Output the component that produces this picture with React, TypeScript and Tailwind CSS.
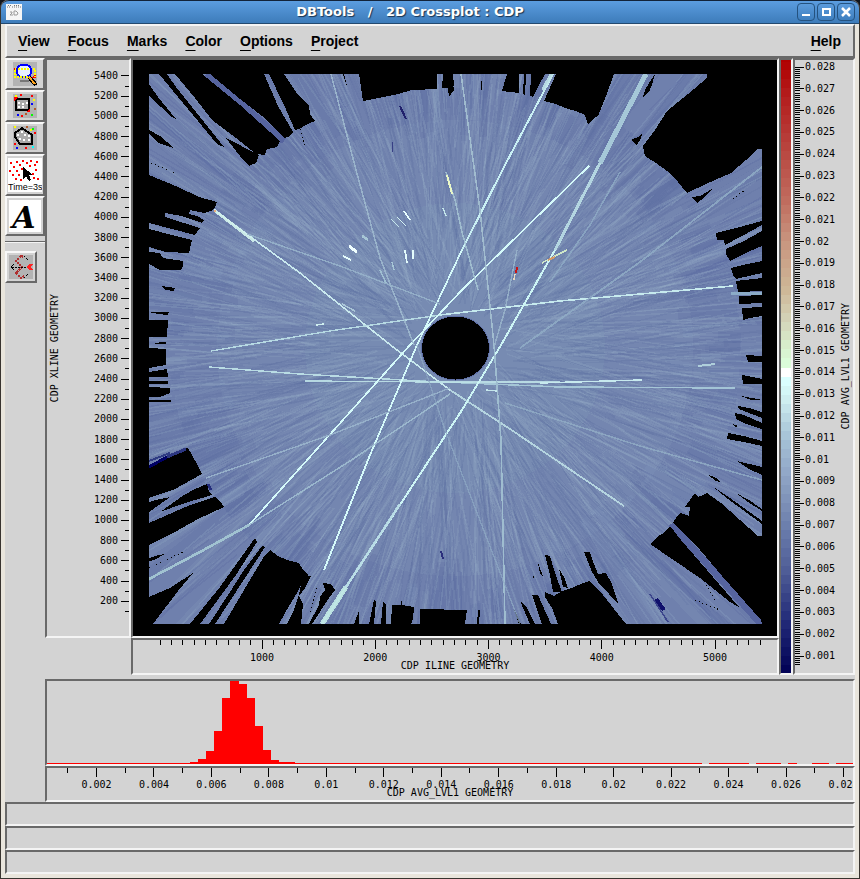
import React from "react";

const SUNK =
  "border-2 border-t-[#696969] border-l-[#696969] border-b-[#f4f4f4] border-r-[#f4f4f4] bg-[#d3d3d3]";
const MONO = "font-['DejaVu_Sans_Mono',monospace] text-[10px] leading-[10px]";

function seeded(seed: number) {
  let s = seed;
  return () => {
    s = (s * 1664525 + 1013904223) >>> 0;
    return s / 4294967296;
  };
}

type Streak = { x1: number; y1: number; x2: number; y2: number; w: number; c: string; o: number };

function makeStreaks(): Streak[] {
  const rnd = seeded(77);
  const out: Streak[] = [];
  const cx = 455;
  const cy = 348;
  const push = (a: number, p: number, r1: number, r2: number, w: number, c: string, o: number) => {
    const dx = Math.cos(a);
    const dy = Math.sin(a);
    out.push({
      x1: Math.round(cx - dy * p + dx * r1),
      y1: Math.round(cy + dx * p + dy * r1 * 0.96),
      x2: Math.round(cx - dy * p + dx * r2),
      y2: Math.round(cy + dx * p + dy * r2 * 0.96),
      w,
      c,
      o,
    });
  };
  for (let i = 0; i < 320; i++) {
    const r1 = 215 + rnd() * 60;
    const r2 = rnd() < 0.5 ? 500 : 285;
    push(rnd() * Math.PI * 2, (rnd() - 0.5) * 60, r1, r2, 3 + rnd() * 9, rnd() < 0.6 ? "#5f70a3" : "#8196bb", 0.28);
  }
  for (let i = 0; i < 1800; i++) {
    const r1 = 40 + rnd() * 190;
    const r2 = r1 + 50 + rnd() * 170;
    const light = rnd() < 0.48;
    push(rnd() * Math.PI * 2, (rnd() - 0.5) * 66, r1, r2, 1 + rnd() * 1.2, light ? "#9bb2ca" : "#5d6fa2", light ? 0.18 : 0.2);
  }
  for (let i = 0; i < 260; i++) {
    const r1 = 220 + rnd() * 100;
    push(rnd() * Math.PI * 2, (rnd() - 0.5) * 60, r1, 520, 1.5, rnd() < 0.5 ? "#8ca4c2" : "#5c6ca3", 0.3);
  }
  return out;
}
const STREAKS = makeStreaks();

const GAPS: string[] = [
  "149,84 158,97 176,119 172,117 149,96",
  "149,130 160,136 174,148 158,143 149,133",
  "159,74 167,74 176,87 224,147 217,144",
  "175,74 202,74 240,105 280,141 277,147 267,149 265,155 256,154 236,138 212,120 195,98",
  "226,138 259,155 256,163 249,166 243,160",
  "210,74 264,74 278,106 293,132 290,136 284,138 262,116 240,99",
  "269,74 284,74 296,92 309,106 310,114 315,121 308,124 299,129 295,130 284,105",
  "344,74 347,86 345,80 343,74",
  "359,74 437,74 437,89 412,90 398,94 389,96 378,98 363,101",
  "443,74 451,74 454,90 449,97 448,88 442,88",
  "451,74 453,74 454,86 452,85",
  "507,74 519,74 519,93 502,91",
  "524,74 526,74 525,96 523,94",
  "531,74 545,74 539,85 533,97 530,96",
  "481,81 482,81 482,90 481,90",
  "556,74 614,74 606,96 598,116 593,119 588,125 585,115 576,111 565,108 556,104 544,101",
  "655,74 652,85 649,92 643,97 645,90 651,80",
  "707,74 707,78 688,94 667,111 655,130 643,146 645,156 656,163 667,171 678,182 687,193 706,184 731,173 746,160 758,149 762,149 762,74",
  "631,140 638,137 643,132 640,140 637,145",
  "692,197 700,196 712,189 704,198 697,203",
  "716,233 740,227 762,221 762,225 742,236 725,245 724,240 717,240",
  "726,249 744,241 762,231 762,246 748,252 730,261 726,254",
  "731,268 747,264 762,261 762,273 736,279 733,275",
  "736,281 762,278 762,291 738,292",
  "739,296 762,295 762,303 739,304",
  "742,308 762,307 762,316 750,318 743,320",
  "746,355 762,356 762,362 748,362",
  "742,375 752,377 762,379 762,384 743,384",
  "741,396 752,398 762,400 751,400",
  "738,406 749,408 762,412 762,418 739,409",
  "735,413 744,415 762,423 762,429 746,424 736,419",
  "732,424 739,426 735,427",
  "728,433 744,436 762,441 762,446 744,442 727,439",
  "737,461 762,467 762,475 749,469",
  "712,486 728,499 762,524 762,521 730,498",
  "736,493 749,500 762,509 762,511 748,502",
  "707,474 716,478 722,483 716,481",
  "695,493 698,497 703,495 707,493 721,503 758,536 762,536 762,624 761,620 722,576 695,544 680,530 673,523 677,516 681,513 689,516 690,507 685,507",
  "650,544 657,537 665,532 670,526 681,540 713,577 739,607 730,602 700,578",
  "584,552 590,552 594,564 598,574 606,573 611,582 619,605 609,594 600,585 592,572",
  "558,624 552,608 545,597 545,592 554,596 562,591 572,588 583,583 590,581 603,595 626,624",
  "545,555 550,556 555,573 562,592 553,592 550,575",
  "538,563 543,576 544,578 540,574",
  "559,569 564,577 568,588 563,587",
  "533,573 534,578 533,578",
  "532,595 538,595 551,624 542,624",
  "521,602 526,606 535,624 530,624 523,608",
  "514,609 517,615 521,624 519,624",
  "420,609 467,610 465,624 420,624",
  "478,610 480,610 479,624 477,624",
  "392,605 401,605 401,597 402,605 414,607 413,619 411,624 391,624",
  "383,602 386,604 386,624 381,624",
  "374,600 376,601 374,624 369,624",
  "359,611 359,624 354,624",
  "323,583 331,584 335,590 329,598 312,624 309,624 319,605 320,597 325,590",
  "303,575 311,576 305,588 299,596 303,604 301,624 287,624 294,610 299,595",
  "270,550 278,556 287,560 299,563 303,570 309,575 304,577 301,585 297,593 289,606 279,624 224,624 244,590 265,555",
  "262,546 265,547 245,578 215,624 209,624 230,592 244,570",
  "255,538 257,542 236,575 200,624 190,624 220,587",
  "149,597 170,588 193,573 178,591 153,624 149,624",
  "149,545 175,532 198,519 224,507 221,502 215,497 190,505 149,523",
  "160,512 184,495 195,489 207,484 209,492 212,495 185,503",
  "149,502 160,499 170,497 159,505 149,512",
  "149,498 175,489 202,474 197,464 192,455 188,448 177,451 165,457 149,467",
  "149,558 158,555 165,554 154,560 149,561",
  "149,348 166,349 166,365 149,368",
  "149,372 167,369 168,377 149,377",
  "149,381 168,381 168,384 149,384",
  "149,387 170,388 170,393 160,397 149,397",
  "149,400 171,400 171,402 149,402",
  "149,320 168,320 167,337 149,337",
  "149,312 169,312 168,315 158,314",
  "161,286 175,288 174,291 165,290",
  "152,343 166,342 166,344 158,344",
  "149,252 160,253 163,258 183,261 183,266 181,270 160,270 149,264",
  "149,229 176,236 192,240 189,253 166,252 149,247",
  "149,175 178,187 199,197 217,202 215,208 211,211 204,213 190,210 189,214 197,216 204,220 202,223 182,216 165,213 165,217 200,228 195,235 172,229 149,223",
];

const BRIGHT: [string, string, number, number][] = [
  ["214,210 300,273 393,347 450,390", "#c9e9ee", 1.6, 1],
  ["214,210 254,241", "#d3f2ec", 3, 0.9],
  ["450,390 510,429 624,506", "#b5d5e0", 1.8, 1],
  ["211,351 330,331 440,315", "#b6d9e3", 1.4, 1],
  ["440,315 560,301 733,286", "#c6eaee", 1.6, 1],
  ["209,367 300,374 420,381", "#b9dce4", 1.5, 1],
  ["420,381 560,387 735,388", "#aaccda", 1.5, 0.9],
  ["305,381 440,382 560,382", "#bfe2e8", 1.4, 0.9],
  ["540,383 642,380", "#c7e9ee", 1.5, 1],
  ["249,525 410,345 462,290 589,166", "#d5fafa", 1.7, 1],
  ["324,570 370,455 417,345 462,250", "#d5fafa", 1.7, 1],
  ["462,250 505,165 553,74", "#c9f0f4", 2, 1],
  ["543,90 552,74", "#bfe3ea", 4, 0.9],
  ["322,624 462,410 501,345 555,250", "#cdf5f5", 2, 1],
  ["322,624 346,587", "#bfe6e4", 5, 0.95],
  ["346,587 400,504", "#b8dce6", 2.6, 0.9],
  ["555,250 600,163", "#b7dae4", 3, 0.95],
  ["600,163 646,74", "#a9cbda", 5, 0.95],
  ["331,74 356,170 380,258 414,345", "#9db8ce", 1.5, 0.9],
  ["461,74 480,210 494,345", "#a5c1d2", 1.5, 0.9],
  ["494,345 501,440 505,624", "#9fbdd0", 1.6, 1],
  ["149,579 200,552 249,525", "#a3c6d3", 2.6, 0.95],
  ["249,525 350,461 450,394", "#9fbcd0", 1.5, 0.9],
  ["206,478 330,435 450,388", "#99b4cc", 1.4, 0.9],
  ["247,234 340,266 440,304", "#96b1ca", 1.4, 0.9],
  ["446,172 455,200 462,232 478,290", "#a9c8d6", 1.5, 0.8],
  ["447,175 452,194", "#eaf8c8", 2, 1],
  ["762,167 640,262 520,348", "#8fabc5", 1.8, 0.85],
  ["620,172 590,225 550,282", "#8fabc5", 1.5, 0.8],
  ["505,403 640,446 762,480", "#91acc6", 1.5, 0.8],
  ["517,250 505,310 494,347", "#98b3ca", 1.5, 0.9],
  ["417,345 445,430 520,624", "#8faac4", 1.3, 0.7],
  ["342,304 355,311", "#cdeff0", 1.5, 0.6],
  ["349,246 357,252", "#f0ffff", 3, 1],
  ["362,236 368,240", "#a7c6d6", 2.5, 1],
  ["316,325 324,324", "#d0f0f0", 1.5, 1],
  ["391,219 399,227", "#c5e7ec", 1.3, 1],
  ["397,217 406,226", "#d5f3f4", 1.3, 1],
  ["404,211 410,220", "#eaffff", 1.5, 1],
  ["405,250 407,263", "#e4fcfc", 1.8, 1],
  ["413,250 413,259", "#e4fcfc", 1.3, 1],
  ["343,256 351,260", "#e4fcfc", 1.8, 1],
  ["392,262 394,270", "#a7c6d6", 1.5, 1],
  ["443,208 446,216", "#c5e7ec", 1.5, 1],
  ["380,270 386,283", "#9fbfd2", 1.5, 1],
  ["567,250 555,256 542,263", "#cfe7c8", 1.4, 1],
  ["555,257 548,260", "#d49b68", 2, 1],
  ["517,267 516,273", "#c81414", 2, 1],
  ["515,274 514,280", "#e8d8c0", 1.5, 1],
  ["698,366 715,364", "#b5d6df", 2, 0.9],
  ["731,293 762,293", "#8fb0cb", 3, 0.9],
  ["486,390 497,391", "#c5e7ec", 1.4, 1],
  ["400,106 406,119", "#20206c", 2, 1],
  ["441,551 443,559", "#2b2f7c", 2, 1],
  ["656,599 664,610", "#10106c", 4, 1],
  ["650,594 668,622", "#373f88", 1.5, 0.9],
  ["149,467 158,462 167,457", "#000064", 3, 1],
  ["167,457 186,449", "#2c3680", 3, 1],
  ["149,461 170,453", "#303c84", 2, 1],
  ["208,484 211,490", "#242c7c", 3, 1],
  ["392,142 392,152", "#2b2f7c", 1, 0.8],
];

const DOTTED = [
  "300,129 306,148",
  "151,163 175,173",
  "695,600 720,610",
  "706,585 715,600",
  "149,568 185,551",
  "310,612 318,585",
  "733,199 745,190",
];

function Crossplot() {
  return (
    <svg
      viewBox="133 60 644 576"
      preserveAspectRatio="none"
      shapeRendering="crispEdges"
      className="w-full bg-black"
      role="img"
      aria-label="2D crossplot"
    >
      <defs>
        <clipPath id="data">
          <rect x="149" y="74" width="613" height="550" />
        </clipPath>
      </defs>
      <g clipPath="url(#data)">
        <rect x="149" y="74" width="613" height="550" fill="#6f80ad" />
        <ellipse cx="455" cy="348" rx="238" ry="228" fill="#7486b0" />
        <ellipse cx="455" cy="348" rx="150" ry="145" fill="#778bb2" />
        {STREAKS.map((s, i) => (
          <line key={i} x1={s.x1} y1={s.y1} x2={s.x2} y2={s.y2} stroke={s.c} strokeWidth={s.w} opacity={s.o} />
        ))}
        <g stroke="#56649f" strokeWidth="7">
          <path d="M206 74L284 141" />
          <path d="M671 524L761 624" />
        </g>
        {GAPS.map((p, i) => (
          <polygon key={i} points={p} fill="#000" />
        ))}
        {DOTTED.map((p, i) => (
          <polyline key={i} points={p} stroke="#000" strokeDasharray="1 3" fill="none" />
        ))}
        {BRIGHT.map(([p, c, w, o], i) => (
          <polyline key={i} points={p} fill="none" stroke={c} strokeWidth={w} opacity={o} />
        ))}
        <circle cx="215" cy="211" r="1.6" fill="#e8b080" />
        <ellipse cx="455.500" cy="348" rx="34" ry="32" fill="#000" stroke="#5f6fa6" strokeWidth="1" />
      </g>
    </svg>
  );
}

const range = (a: number, b: number) => Array.from({ length: b - a + 1 }, (_, i) => a + i);

function XlineAxis() {
  const y = (v: number) => `${((76 + (5400 - v) * 0.1012 - 60) / 577) * 100}%`;
  return (
    <div className={`flex w-[86px] items-center pl-[3px] ${SUNK} ${MONO}`}>
      <span className="w-3 rotate-180 whitespace-nowrap [writing-mode:vertical-rl]">CDP XLINE GEOMETRY</span>
      <svg className="h-auto w-0 flex-1 self-stretch" shapeRendering="crispEdges">
        {range(1, 54).map((n) => (
          <g key={n}>
            <line x1={n % 2 ? 63 : 59} x2={67} y1={y(n * 100)} y2={y(n * 100)} stroke="#000" />
            {n % 2 === 0 && (
              <text x={56} y={y(n * 100)} dy={3} textAnchor="end">
                {n * 100}
              </text>
            )}
          </g>
        ))}
      </svg>
    </div>
  );
}

function IlineAxis() {
  const x = (v: number) => `${((262 + (v - 1000) * 0.11325 - 133) / 644) * 100}%`;
  return (
    <div className={`h-[37px] ${SUNK} ${MONO}`}>
      <svg className="h-full w-full" shapeRendering="crispEdges">
        {range(1, 54).map((n) => (
          <g key={n}>
            <line x1={x(n * 100)} x2={x(n * 100)} y1={0} y2={n % 10 ? 5 : 9} stroke="#000" />
            {n % 10 === 0 && (
              <text x={x(n * 100)} y={21} textAnchor="middle">
                {n * 100}
              </text>
            )}
          </g>
        ))}
        <text x="50%" y={29} textAnchor="middle">
          CDP ILINE GEOMETRY
        </text>
      </svg>
    </div>
  );
}

const STOPS: [number, number, number, number][] = [
  [60, 176, 0, 0],
  [100, 180, 32, 32],
  [150, 184, 70, 64],
  [200, 192, 108, 94],
  [240, 200, 148, 126],
  [290, 206, 184, 152],
  [320, 212, 212, 184],
  [350, 216, 242, 208],
  [366, 220, 255, 220],
  [371, 255, 255, 255],
  [380, 218, 255, 255],
  [396, 208, 240, 241],
  [430, 170, 200, 218],
  [470, 146, 168, 200],
  [500, 126, 146, 184],
  [530, 104, 122, 170],
  [570, 78, 92, 150],
  [620, 34, 42, 120],
  [672, 0, 0, 84],
];

function heat(y: number) {
  let i = 0;
  while (i < STOPS.length - 2 && STOPS[i + 1][0] < y) i++;
  const a = STOPS[i];
  const b = STOPS[i + 1];
  const t = Math.min(1, Math.max(0, (y - a[0]) / (b[0] - a[0])));
  const m = (k: number) => Math.round(a[k] + (b[k] - a[k]) * t);
  return `rgb(${m(1)},${m(2)},${m(3)})`;
}

function ColorBar() {
  return (
    <div className={`flex w-[14px] ${SUNK}`}>
      <svg viewBox="0 60 10 612" preserveAspectRatio="none" className="h-auto w-0 flex-1" shapeRendering="crispEdges">
        {range(0, 67).map((n) => (
          <rect key={n} x="0" y={60 + n * 9 + 1} width="10" height="10" fill={heat(64 + n * 9 + 1)} />
        ))}
        <rect x="0" y="60" width="10" height="2" fill="#b00000" />
      </svg>
    </div>
  );
}

function ValueScale() {
  const y = (v: number) => `${((67 + (280 - v) * 2.1815 - 60) / 613) * 100}%`;
  return (
    <div className={`flex w-[62px] items-center ${SUNK} ${MONO}`}>
      <svg className="h-auto w-0 flex-1 self-stretch" shapeRendering="crispEdges">
        {range(6, 280).map((n) => (
          <g key={n}>
            <line x1={0} x2={n % 10 ? 5 : 9} y1={y(n)} y2={y(n)} stroke="#000" />
            {n % 10 === 0 && (
              <text x={10} y={y(n)} dy={3}>
                {String(n / 10000)}
              </text>
            )}
          </g>
        ))}
      </svg>
      <span className="w-3 rotate-180 whitespace-nowrap [writing-mode:vertical-rl]">CDP AVG_LVL1 GEOMETRY</span>
    </div>
  );
}

const BARS: [number, number, number][] = [
  [190, 8, 762],
  [198, 8, 759],
  [206, 8, 751],
  [214, 8, 731],
  [222, 8, 698],
  [230, 9, 681],
  [239, 8, 684],
  [247, 8, 698],
  [255, 8, 726],
  [263, 8, 750],
  [271, 8, 760],
  [279, 16, 762],
  [47, 655, 763],
  [709, 40, 763],
  [756, 25, 763],
  [788, 9, 763],
  [812, 17, 763],
  [836, 17, 763],
];

function Histogram() {
  const x = (v: number) => `${((96.5 + (v - 2) * 28.73 - 47) / 806) * 100}%`;
  return (
    <>
      <div className={`h-[87px] ${SUNK}`}>
        <svg viewBox="47 681 806 83" preserveAspectRatio="none" className="h-full w-full" shapeRendering="crispEdges">
          {BARS.map(([bx, w, top], i) => (
            <rect key={i} x={bx} y={top} width={w} height={764 - top} fill="#f00" />
          ))}
        </svg>
      </div>
      <div className={`h-9 ${SUNK} ${MONO}`}>
        <svg className="h-full w-full" shapeRendering="crispEdges">
          {range(1, 28).map((n) => (
            <g key={n}>
              <line x1={x(n)} x2={x(n)} y1={0} y2={n % 2 ? 5 : 9} stroke="#000" />
              {n % 2 === 0 && (
                <text x={x(n)} y={20} textAnchor="middle">
                  {String(n / 1000)}
                </text>
              )}
            </g>
          ))}
          <text x="50%" y={28} textAnchor="middle">
            CDP AVG_LVL1 GEOMETRY
          </text>
        </svg>
      </div>
    </>
  );
}

function Dots({ list }: { list: [number, number, string][] }) {
  return (
    <>
      {list.map(([x, y, c], i) => (
        <rect key={i} x={x} y={y} width="2" height="2" fill={c} />
      ))}
    </>
  );
}

const R = "#f00";
const Y = "#ff0";
const W = "#fff";

const ZoomIcon = () => (
  <svg width="24" height="24" shapeRendering="crispEdges" aria-hidden="true">
    <rect width="24" height="24" fill="#b3b3b3" />
    <path d="M1 6h4v4H1zM23 12v4h-5z" fill={R} />
    <path d="M7 18h9v2H7z" fill="#777" />
    <ellipse cx="11" cy="9" rx="7.500" ry="6.500" fill="#e8f0ff" stroke="#00f" strokeWidth="2" />
    <path d="M2 7h20M1 15h18" stroke={Y} strokeWidth="2" strokeDasharray="2 1" />
    <path d="M2 8v7M22 8v7" stroke={Y} strokeWidth="2" strokeDasharray="2 1" />
    <path d="M4 6v6M18 6v6" stroke="#00f" strokeWidth="2" />
    <path d="M16 15l7 8" stroke="#000" strokeWidth="4" />
    <path d="M16 15l6 7" stroke="#ffa51e" strokeWidth="2" />
  </svg>
);

const RectIcon = () => (
  <svg width="24" height="24" shapeRendering="crispEdges" aria-hidden="true">
    <rect width="24" height="24" fill="#b3b3b3" />
    <rect x="3" y="5" width="13" height="11" rx="1" fill="#aaa" stroke="#000" strokeWidth="2" />
    <path d="M1 3h4L1 8zM13 18h4v-4z" fill={R} />
    <Dots
      list={[
        [5, 8, W], [9, 9, W], [13, 8, W], [5, 12, W], [9, 12, W], [2, 1, Y], [7, 0, R], [18, 1, R], [20, 5, Y],
        [18, 9, "#00f"], [21, 14, "#b5592b"], [18, 20, "#0f0"], [12, 19, "#b5592b"], [8, 21, R], [4, 20, "#00f"],
      ]}
    />
  </svg>
);

const PolyIcon = () => (
  <svg width="24" height="24" shapeRendering="crispEdges" aria-hidden="true">
    <rect width="24" height="24" fill="#b3b3b3" />
    <path d="M2 7l7-5 10 7v9H7L2 11z" fill="#aaa" stroke="#000" strokeWidth="2" />
    <Dots
      list={[
        [8, 5, W], [4, 8, W], [11, 8, W], [6, 12, W], [15, 9, W], [10, 13, W], [15, 13, W], [1, 0, Y],
        [13, 0, "#b5592b"], [17, 3, Y], [19, 2, "#0f0"], [21, 6, R], [1, 17, R], [3, 21, "#00f"], [12, 21, R],
        [19, 20, "#0ff"],
      ]}
    />
  </svg>
);

const TimeIcon = () => (
  <svg width="34" height="34" shapeRendering="crispEdges" aria-hidden="true">
    <rect width="34" height="34" fill="#fff" />
    <Dots
      list={[
        [2, 4, R], [8, 3, R], [14, 2, R], [18, 4, R], [22, 2, R], [28, 3, R], [5, 8, R], [11, 6, R], [21, 7, R],
        [26, 6, R], [1, 12, R], [8, 12, R], [13, 10, R], [27, 11, R], [4, 16, R], [10, 16, R], [24, 15, R],
        [7, 20, R], [12, 21, R], [29, 20, R], [25, 19, R],
      ]}
    />
    <path d="M15 9v12l3-3 3 5 2-1-2-5h4z" fill="#000" />
    <text x="0" y="32" className="font-['Liberation_Sans',sans-serif] text-[9px]">
      Time=3s
    </text>
  </svg>
);

const LetterIcon = () => (
  <svg width="32" height="32" aria-hidden="true">
    <rect width="32" height="32" fill="#fff" />
    <text x="15" y="28" textAnchor="middle" className="font-['DejaVu_Serif',serif] text-[30px] font-bold italic">
      A
    </text>
  </svg>
);

const BowIcon = () => (
  <svg width="24" height="24" shapeRendering="crispEdges" aria-hidden="true" fill="none">
    <rect width="24" height="24" fill="#b3b3b3" />
    <path d="M12 1L7 6l6 6-6 6 5 5 3-2M12 1l3 1" stroke="#b03030" strokeWidth="2" strokeDasharray="2 1" />
    <path d="M15 1l4 4M15 23l4-4" stroke="#000" strokeDasharray="2 1" />
    <path d="M3 12h15" stroke="#000" strokeDasharray="2 1" />
    <path d="M5 9l-3 3 3 3" stroke="#000" />
    <path d="M17 12l3-3h4l-2 3 2 3h-4z" fill="#f22" />
  </svg>
);

function Tool({ label, children }: { label: string; children: React.ReactNode }) {
  return (
    <button
      type="button"
      aria-label={label}
      className="flex w-full items-center justify-center border-2 border-t-[#f8f8f8] border-r-[#696969] border-b-[#696969] border-l-[#f8f8f8] bg-[#d3d3d3] py-[2px]"
    >
      {children}
    </button>
  );
}

function MenuItem({ name }: { name: string }) {
  return (
    <button type="button" className="h-6 text-[14px] leading-6 font-bold text-black">
      <span className="underline decoration-1 underline-offset-4">{name[0]}</span>
      {name.slice(1)}
    </button>
  );
}

function WinButton({ label, children }: { label: string; children: React.ReactNode }) {
  return (
    <button
      type="button"
      aria-label={label}
      className="flex size-[18px] items-center justify-center rounded-[4px] border border-[#24527f] bg-linear-to-b from-[#5b9bdc] to-[#3e7fbf]"
    >
      <svg width="12" height="12" fill="none" stroke="#fff" strokeWidth="2" shapeRendering="crispEdges">
        {children}
      </svg>
    </button>
  );
}

export default function App() {
  return (
    <div className="min-h-screen bg-[#10141c] text-black">
      <div className="flex min-h-screen flex-col rounded-t-lg border-x border-b border-[#38342f] bg-[#e9e5dc]">
        <header className="flex h-6 items-center rounded-t-lg border-t border-b border-t-[#12233a] border-b-[#23496f] bg-linear-to-b from-[#5b9de0] to-[#3d7cba] px-1">
          <div className="flex w-5">
            <svg width="16" height="16" className="ml-px" aria-hidden="true">
              <rect width="16" height="16" fill="#f6f6f6" />
              <path d="M1 3h4M6 3h3M10 3h5M2 1.500h3M8 1.500h5" stroke="#777" strokeDasharray="1 1" />
              <path d="M4 8h2v1l-2 2h3M8 11V7h2l2 2-1 2z" stroke="#999" fill="none" />
            </svg>
          </div>
          <h1 className="flex-1 text-center font-['DejaVu_Sans',sans-serif] text-[13px] leading-5 font-bold whitespace-pre text-white [text-shadow:1px_1px_1px_#1a3350]">
            {"DBTools   /   2D Crossplot : CDP"}
          </h1>
          <div className="flex w-[60px] justify-end gap-[2px]">
            <WinButton label="Minimize">
              <path d="M2 9h8" />
            </WinButton>
            <WinButton label="Maximize">
              <path d="M3 3h7v6H3z" />
            </WinButton>
            <WinButton label="Close">
              <path d="M2 2l8 8M10 2l-8 8" shapeRendering="auto" strokeWidth="2.500" />
            </WinButton>
          </div>
        </header>

        <main className="mx-1 mb-1 flex flex-1 flex-col bg-[#d3d3d3]">
          <nav className="flex h-[34px] items-center gap-[18px] border-2 border-t-[#f4f4f4] border-r-[#696969] border-b-[#696969] border-l-[#f4f4f4] pr-3 pl-[11px] font-['Liberation_Sans',sans-serif]">
            {["View", "Focus", "Marks", "Color", "Options", "Project"].map((m) => (
              <MenuItem key={m} name={m} />
            ))}
            <span className="flex-1" />
            <MenuItem name="Help" />
          </nav>

          <div className="flex flex-1">
            <aside className="flex w-10 flex-col">
              <Tool label="Zoom">
                <ZoomIcon />
              </Tool>
              <Tool label="Select rectangle">
                <RectIcon />
              </Tool>
              <Tool label="Select polygon">
                <PolyIcon />
              </Tool>
              <Tool label="Pick">
                <TimeIcon />
              </Tool>
              <Tool label="Annotate">
                <LetterIcon />
              </Tool>
              <div className="mt-[5px] mb-2 h-[2px] border-t border-b border-t-[#696969] border-b-[#f4f4f4]" />
              <div className="w-8">
                <Tool label="Bow">
                  <BowIcon />
                </Tool>
              </div>
            </aside>

            <div className="flex min-w-0 flex-1 flex-col">
              <div className="flex flex-1">
                <div className="flex min-w-0 flex-1 flex-col">
                  <div className="flex flex-1">
                    <XlineAxis />
                    <div className={`flex min-w-0 flex-1 ${SUNK}`}>
                      <Crossplot />
                    </div>
                  </div>
                  <div className="pl-[86px]">
                    <IlineAxis />
                  </div>
                </div>
                <ColorBar />
                <ValueScale />
              </div>
              <div className="mt-1">
                <Histogram />
              </div>
            </div>
          </div>

          <div className={`h-6 ${SUNK}`} />
          <div className={`h-6 ${SUNK}`} />
          <div className={`h-6 ${SUNK}`} />
        </main>
      </div>
    </div>
  );
}
